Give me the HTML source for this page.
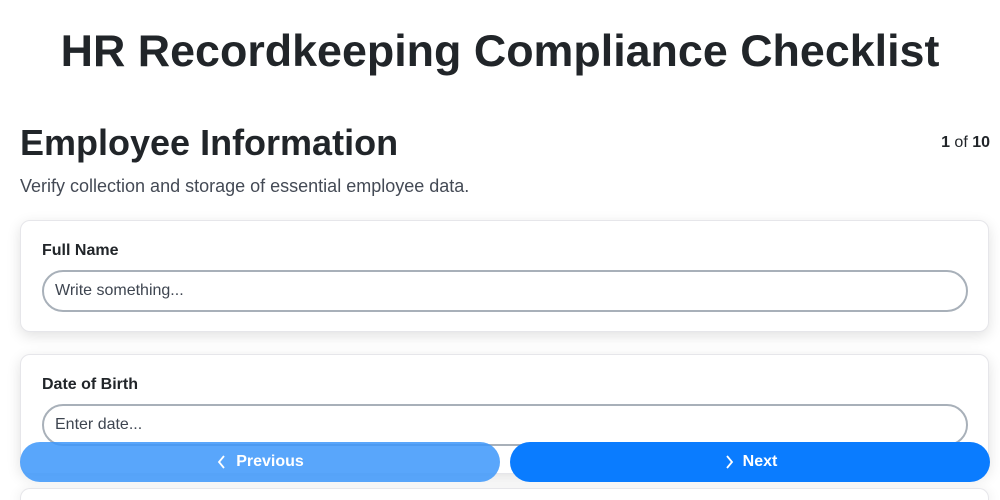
<!DOCTYPE html>
<html style="overflow:hidden;height:500px"><head><style>
*{box-sizing:border-box;margin:0;padding:0}
body{width:1000px;height:500px;overflow:hidden;background:#fff;font-family:"Liberation Sans",sans-serif;color:#212529;position:relative}
h1{position:absolute;top:26px;left:0;width:1000px;text-align:center;font-size:44.8px;font-weight:700;line-height:50px}
h2{position:absolute;top:122px;left:20px;font-size:36px;font-weight:700;line-height:42px}
.cnt{position:absolute;top:134px;right:10px;font-size:16px}
.sub{position:absolute;top:176px;left:20px;font-size:18px;color:#444a55}
.card{position:absolute;left:20px;width:969px;background:#fff;border:1px solid #e6e6ea;border-radius:10px;box-shadow:0 4px 14px rgba(0,0,0,.12)}
.lbl{position:absolute;left:21px;font-size:16px;font-weight:700}
.inp{position:absolute;left:21px;width:926px;height:42px;border:2px solid #a8b0b9;border-radius:21px;padding-left:11px;line-height:38px;font-size:16px;color:#3e4550}
.btn{position:absolute;top:442px;height:40px;border-radius:20px;color:#fff;font-weight:700;font-size:16px;display:flex;align-items:center;justify-content:center;gap:8px}
</style></head><body>
<h1>HR Recordkeeping Compliance Checklist</h1>
<h2>Employee Information</h2>
<div class="cnt"><b>1</b> of <b>10</b></div>
<div class="sub">Verify collection and storage of essential employee data.</div>
<div class="card" style="top:220px;height:112px"><div class="lbl" style="top:21px">Full Name</div><div class="inp" style="top:49px">Write something...</div></div>
<div class="card" style="top:354px;height:120px"><div class="lbl" style="top:21px">Date of Birth</div><div class="inp" style="top:49px">Enter date...</div></div>
<div class="card" style="top:488px;height:12px;border-bottom:none;border-radius:10px 10px 0 0"></div>
<div class="btn" style="left:20px;width:480px;background:rgba(60,150,250,.85)"><svg width="12" height="16" viewBox="0 0 12 16"><path d="M8 2L3 8l5 6" stroke="#fff" stroke-width="1.8" fill="none"/></svg>Previous</div>
<div class="btn" style="left:510px;width:480px;background:#0a7cff"><svg width="12" height="16" viewBox="0 0 12 16"><path d="M4 2l5 6-5 6" stroke="#fff" stroke-width="1.8" fill="none"/></svg>Next</div>
</body></html>
